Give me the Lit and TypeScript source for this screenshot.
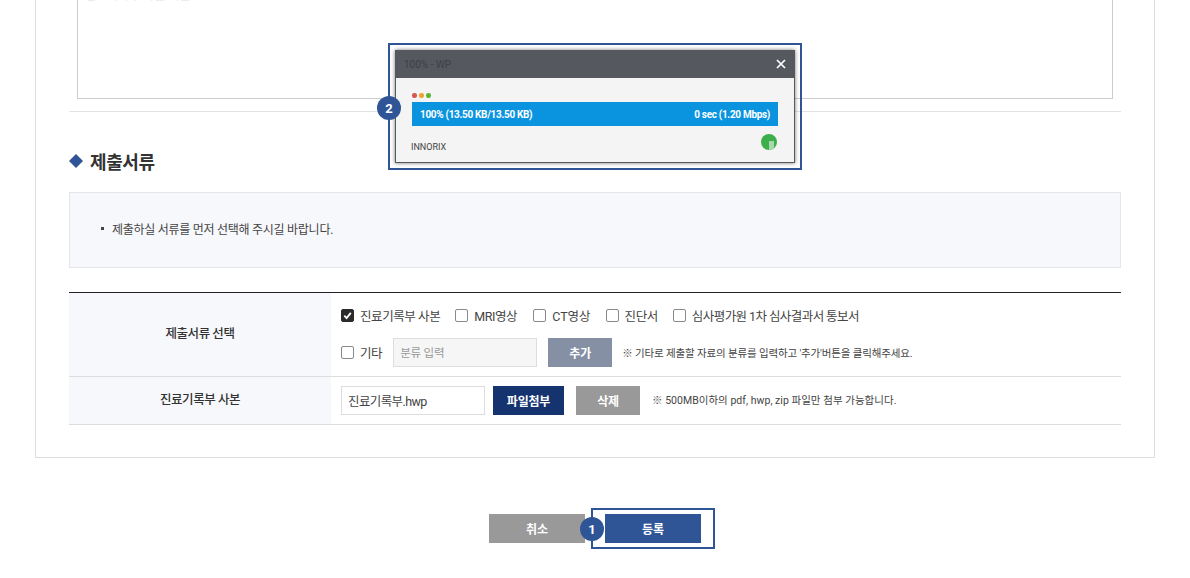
import { LitElement, html, css, svg } from "lit";
import { customElement } from "lit/decorators.js";

@customElement("app-root")
export class AppRoot extends LitElement {
  static styles = css`
    :host {
      display: block;
      position: relative;
      width: 1190px;
      height: 578px;
      overflow: hidden;
      background: #fff;
      font-family: Roboto, "Noto Sans CJK KR", "Noto Sans", sans-serif;
      color: #333;
      font-size: 12px;
    }
    * { box-sizing: border-box; }
    .card {
      display: flow-root;
      margin: 0 35px;
      width: 1120px;
      height: 458px;
      border: 1px solid #ddd;
      border-top: 0;
      padding: 0 33px;
    }
    .area {
      margin: -20px 8px 0;
      height: 119px;
      border: 1px solid #ccc;
      padding: 6px 7px;
      font-size: 12px;
      line-height: 18px;
      color: #e8e8e8;
    }
    .sep { height: 1px; background: #e2e2e2; margin-top: 12px; }
    h2 {
      margin: 35px 0 0;
      height: 28px;
      display: flex;
      align-items: center;
      gap: 7px;
      font-size: 18px;
      font-weight: 700;
      letter-spacing: -0.4px;
      color: #333;
    }
    .diamond { width: 14px; height: 14px; flex: none; }
    .notice {
      margin-top: 17px;
      height: 76px;
      background: #f7f8fb;
      border: 1px solid #e4e6ea;
      display: flex;
      align-items: center;
      padding: 0 0 3px 31px;
      gap: 8px;
      font-size: 12px;
      letter-spacing: -0.27px;
      color: #444;
    }
    .dot { width: 3px; height: 3px; background: #444; flex: none; }
    .table { margin-top: 24px; border-top: 1px solid #222; }
    .row { display: flex; border-bottom: 1px solid #ddd; }
    .r1 { height: 84px; }
    .r2 { height: 48px; }
    .th {
      width: 262px;
      flex: none;
      background: #f7f8fb;
      display: flex;
      align-items: center;
      justify-content: center;
      font-weight: 500;
      font-size: 12.5px;
      letter-spacing: -0.45px;
      color: #333;
    }
    .r1 .th { padding-bottom: 5px; }
    .r2 .th { padding-bottom: 4px; }
    .td {
      flex: 1;
      padding-left: 10px;
      display: flex;
      flex-direction: column;
      justify-content: center;
    }
    .line { display: flex; align-items: center; }
    .l1 { height: 30px; margin-bottom: 7px; margin-top: -2px; }
    .l2 { height: 30px; }
    .chk { display: flex; align-items: center; gap: 6px; margin-right: 15px; font-size: 12.5px; letter-spacing: -0.42px; color: #444; }
    .l1 .chk:nth-child(2) { margin-right: 16px; }
    .l1 .chk:nth-child(3) { letter-spacing: 0; }
    .l1 .chk:last-child { letter-spacing: -0.57px; }
    .box {
      width: 13px; height: 13px; flex: none;
      border: 1px solid #8a8a8a; border-radius: 2px; background: #fff;
      display: flex; align-items: center; justify-content: center;
    }
    .box.on { background: #2b2b2b; border-color: #2b2b2b; }
    .box svg { width: 11px; height: 11px; display: block; }
    .input {
      width: 144px; height: 29px; flex: none;
      border: 1px solid #ddd;
      display: flex; align-items: center;
      padding: 0 0 1px 6px;
      font-size: 12.5px;
      letter-spacing: -0.6px;
      color: #444;
    }
    .input.ph { background: #f6f6f6; color: #999; font-size: 11.5px; letter-spacing: -0.2px; margin-left: -4px; padding-bottom: 0; }
    .btn {
      height: 29px; flex: none;
      display: flex; align-items: center; justify-content: center;
      color: #fff; font-weight: 700; font-size: 12px; letter-spacing: -0.2px;
    }
    .add { width: 64px; margin-left: 11px; background: #8590a5; }
    .attach { width: 71px; margin-left: 8px; background: #14336f; }
    .del { width: 64px; margin-left: 12px; background: #999; }
    .note { margin-left: 10px; font-size: 10.5px; letter-spacing: -0.15px; color: #444; }
    .note.n2 { margin-left: 12px; letter-spacing: 0.03px; padding-bottom: 2px; }
    .footer { margin-top: 56px; display: flex; justify-content: center; gap: 20px; }
    .fbtn {
      width: 96px; height: 29px;
      display: flex; align-items: center; justify-content: center;
      color: #fff; font-weight: 700; font-size: 12px;
    }
    .cancel { background: #999; }
    .submit { background: #2f5597; }

    .hl { position: absolute; border: 2px solid #2f5597; }
    .hl1 { left: 388px; top: 43px; width: 414px; height: 127px; }
    .hl2 { left: 591px; top: 508px; width: 124px; height: 41px; }
    .badge {
      position: absolute; width: 24px; height: 24px; border-radius: 50%;
      background: #2f5597; color: #fff; font-weight: 700; font-size: 13px;
      display: flex; align-items: center; justify-content: center;
    }
    .b1 { left: 580px; top: 517px; }
    .b2 { left: 377px; top: 96px; }
    .popup {
      position: absolute; left: 395px; top: 50px; width: 400px; height: 113px;
      background: #f4f4f4;
      border: 1px solid #55585e;
      border-top: 0;
      box-shadow: 0 0 4px rgba(0,0,0,.55);
      display: flex; flex-direction: column;
    }
    .ptitle {
      height: 28px; background: #55585e; flex: none;
      display: flex; align-items: center; justify-content: space-between;
      padding: 0 8px;
      color: #3e4046; font-size: 10px;
    }
    .ptitle svg { width: 10px; height: 10px; display: block; }
    .pbody { padding: 15px 16px 0 16px; flex: 1; display: flex; flex-direction: column; }
    .lights { display: flex; gap: 2.5px; height: 5px; margin-bottom: 4px; }
    .lights i { width: 4.5px; height: 4.5px; border-radius: 50%; display: block; }
    .bar {
      height: 24px; background: #0a94e0; color: #fff;
      display: flex; align-items: center; justify-content: space-between;
      padding: 0 8px;
      font-size: 10px; font-weight: 700; letter-spacing: -0.32px;
    }
    .pfoot { display: flex; justify-content: space-between; align-items: flex-start; margin-top: 8px; }
    .pfoot span { font-size: 9px; color: #444; margin: 7px 0 0 -1px; line-height: 12px; }
    .pfoot svg { width: 16px; height: 16px; display: block; margin-right: 1px; }
  `;

  private check(label: string, on = false) {
    return html`<label class="chk"><span class="box ${on ? "on" : ""}">${on
      ? svg`<svg viewBox="0 0 12 12"><path d="M2.5 6.2 5 8.8 9.6 3.2" fill="none" stroke="#fff" stroke-width="2"/></svg>`
      : ""}</span>${label}</label>`;
  }

  render() {
    return html`
      <div class="card">
        <div class="area">진료기록부 사본 제출</div>
        <div class="sep"></div>
        <h2>
          <svg class="diamond" viewBox="0 0 14 14"><path d="M7 0 14 7 7 14 0 7Z" fill="#2f5597"/></svg>
          제출서류
        </h2>
        <div class="notice"><span class="dot"></span>제출하실 서류를 먼저 선택해 주시길 바랍니다.</div>
        <div class="table">
          <div class="row r1">
            <div class="th">제출서류 선택</div>
            <div class="td">
              <div class="line l1">
                ${this.check("진료기록부 사본", true)}
                ${this.check("MRI영상")}
                ${this.check("CT영상")}
                ${this.check("진단서")}
                ${this.check("심사평가원 1차 심사결과서 통보서")}
              </div>
              <div class="line l2">
                ${this.check("기타")}
                <div class="input ph">분류 입력</div>
                <div class="btn add">추가</div>
                <div class="note">※ 기타로 제출할 자료의 분류를 입력하고 '추가'버튼을 클릭해주세요.</div>
              </div>
            </div>
          </div>
          <div class="row r2">
            <div class="th">진료기록부 사본</div>
            <div class="td">
              <div class="line">
                <div class="input">진료기록부.hwp</div>
                <div class="btn attach">파일첨부</div>
                <div class="btn del">삭제</div>
                <div class="note n2">※ 500MB이하의 pdf, hwp, zip 파일만 첨부 가능합니다.</div>
              </div>
            </div>
          </div>
        </div>
      </div>
      <div class="footer">
        <div class="fbtn cancel">취소</div>
        <div class="fbtn submit">등록</div>
      </div>

      <div class="hl hl1"></div>
      <div class="popup">
        <div class="ptitle">
          <span>100% - WP</span>
          <svg viewBox="0 0 10 10"><path d="M1 1 9 9M9 1 1 9" stroke="#fff" stroke-width="1.7" fill="none"/></svg>
        </div>
        <div class="pbody">
          <div class="lights">
            <i style="background:#d9534f"></i><i style="background:#f0a030"></i><i style="background:#5cb531"></i>
          </div>
          <div class="bar"><span>100% (13.50 KB/13.50 KB)</span><span>0 sec (1.20 Mbps)</span></div>
          <div class="pfoot">
            <span>INNORIX</span>
            <svg viewBox="0 0 16 16"><circle cx="8" cy="8" r="8" fill="#3cae4a"/><path d="M8 16V7H13V14.2A8 8 0 0 1 8 16Z" fill="#a8d8ae"/></svg>
          </div>
        </div>
      </div>
      <div class="badge b2">2</div>
      <div class="hl hl2"></div>
      <div class="badge b1">1</div>
    `;
  }
}
